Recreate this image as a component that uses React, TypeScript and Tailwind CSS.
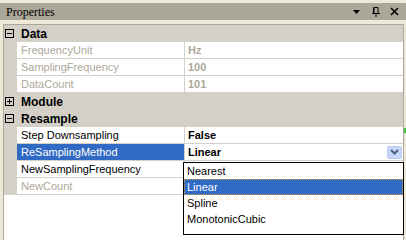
import React from 'react';

interface Prop {
  name: string;
  value: string;
  disabled?: boolean;
  selected?: boolean;
  dropdown?: boolean;
}

interface Category {
  title: string;
  expanded: boolean;
  props: Prop[];
}

const categories: Category[] = [
  {
    title: "Data",
    expanded: true,
    props: [
      { name: "FrequencyUnit", value: "Hz", disabled: true },
      { name: "SamplingFrequency", value: "100", disabled: true },
      { name: "DataCount", value: "101", disabled: true },
    ],
  },
  { title: "Module", expanded: false, props: [] },
  {
    title: "Resample",
    expanded: true,
    props: [
      { name: "Step Downsampling", value: "False" },
      { name: "ReSamplingMethod", value: "Linear", selected: true, dropdown: true },
      { name: "NewSamplingFrequency", value: "" },
      { name: "NewCount", value: "", disabled: true },
    ],
  },
];

const options = ["Nearest", "Linear", "Spline", "MonotonicCubic"];

const ExpandBox: React.FC<{ expanded: boolean }> = ({ expanded }) => (
  <svg width="9" height="9" viewBox="0 0 9 9" className="block">
    <rect x="0.5" y="0.5" width="8" height="8" fill="none" stroke="#000" />
    <line x1="2" y1="4.5" x2="7" y2="4.5" stroke="#000" />
    {!expanded && <line x1="4.5" y1="2" x2="4.5" y2="7" stroke="#000" />}
  </svg>
);

const App: React.FC = () => {
  return (
    <div className="relative w-[406px] h-[240px] overflow-hidden bg-[#ece9d8] font-['Liberation_Sans',sans-serif] text-[11px] text-black">
      {/* title bar */}
      <div className="mt-[3px] h-[17px] bg-[#aca899] flex items-center pl-[6px] pr-[7px]">
        <span className="font-['Liberation_Serif',serif] text-[12px] leading-none">Properties</span>
        <div className="ml-auto flex items-center">
          <svg width="7" height="4" viewBox="0 0 7 4" className="mr-[12px]">
            <path d="M0 0h7L3.5 4z" fill="#000" />
          </svg>
          <svg width="8" height="10" viewBox="0 0 8 10" className="mr-[10px]">
            <path d="M2.5 0.5h3.5v5.5M2 0v6M1.5 0.5v5.5M0 6.5h8M4 6.5V10" stroke="#000" fill="none" />
          </svg>
          <svg width="9" height="9" viewBox="0 0 9 9">
            <path d="M1 1l7 7M8 1L1 8" stroke="#000" strokeWidth="1.6" />
          </svg>
        </div>
      </div>

      {/* grid */}
      <div className="mt-[4px] ml-[3px] w-[401px] h-[216px] border border-b-0 border-[#aca899] bg-white">
        {categories.map((cat) => (
          <div key={cat.title}>
            <div className="h-[17px] bg-[#d4d0c8] flex items-center pl-[1px]">
              <ExpandBox expanded={cat.expanded} />
              <span className="ml-[7px] font-bold text-[12px] leading-none">{cat.title}</span>
            </div>
            {cat.props.map((p) => (
              <div key={p.name} className="h-[17px] flex">
                <div className="w-[13px] bg-[#d4d0c8]" />
                <div
                  className={
                    p.selected
                      ? "w-[168px] border-r border-b border-[#d4d0c8] bg-[#316ac5] text-white flex items-center pl-[4px]"
                      : p.disabled
                      ? "w-[168px] border-r border-b border-[#d4d0c8] text-[#aca899] flex items-center pl-[4px]"
                      : "w-[168px] border-r border-b border-[#d4d0c8] flex items-center pl-[4px]"
                  }
                >
                  {p.name}
                </div>
                <div
                  className={
                    p.disabled
                      ? "flex-1 border-b border-[#d4d0c8] flex items-center pl-[3px] font-bold text-[#aca899]"
                      : "flex-1 border-b border-[#d4d0c8] flex items-center pl-[3px] font-bold"
                  }
                >
                  {p.value}
                  {p.dropdown && (
                    <div className="ml-auto mr-[1px] w-[15px] h-[13px] rounded-[2px] border border-[#b9c9ef] bg-[#c6d6fb] flex items-center justify-center">
                      <svg width="9" height="6" viewBox="0 0 9 6">
                        <path d="M1 1l3.5 3.5L8 1" stroke="#4d6185" strokeWidth="2" fill="none" />
                      </svg>
                    </div>
                  )}
                </div>
              </div>
            ))}
          </div>
        ))}
      </div>

      {/* dropdown list */}
      <div className="absolute left-[183px] top-[162px] w-[221px] h-[73px] border border-black bg-white py-[0px]">
        {options.map((o) =>
          o === "Linear" ? (
            <div
              key={o}
              className="h-[16px] flex items-center pl-[2px] bg-[#316ac5] text-white border border-dotted border-[#d8a040]"
            >
              {o}
            </div>
          ) : (
            <div key={o} className="h-[16px] flex items-center pl-[3px]">
              {o}
            </div>
          )
        )}
      </div>

      <div className="absolute left-[404px] top-[128px] w-[2px] h-[5px] bg-[#3cc23c]" />
    </div>
  );
};

export default App;
